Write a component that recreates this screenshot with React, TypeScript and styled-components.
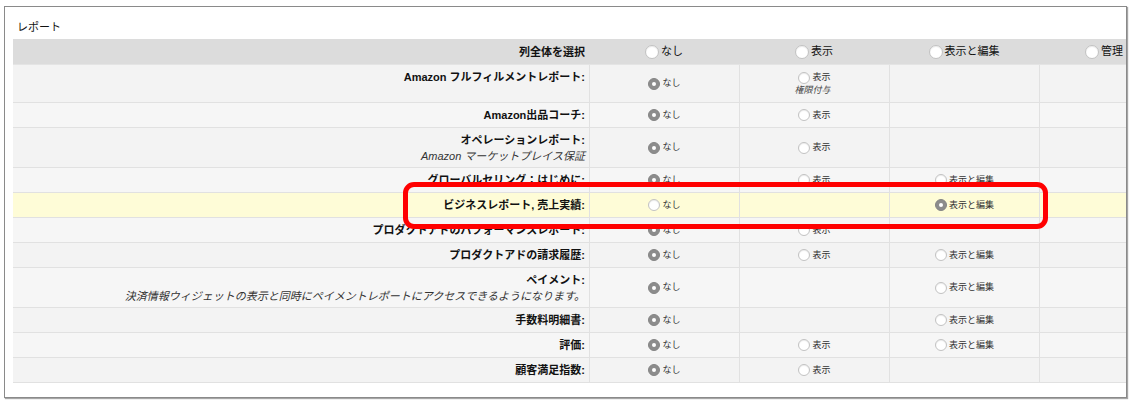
import React from "react";
import styled, { createGlobalStyle } from "styled-components";

const Global = createGlobalStyle`
  html, body { margin: 0; padding: 0; background: #fff; }
  body { font-family: "Liberation Sans", "Noto Sans CJK JP", sans-serif; color: #111; }
  * { box-sizing: border-box; }
`;

const Page = styled.div`
  padding: 6px 0 0 4px;
  width: 1137px;
  height: 405px;
`;

const Panel = styled.section`
  position: relative;
  width: 1123px;
  height: 392px;
  border: 1px solid #8a8a8a;
  box-shadow: 1px 1px 1px rgba(0, 0, 0, 0.35);
  padding: 0 0 0 8px;
  overflow: hidden;
`;

const Title = styled.h2`
  margin: 0;
  padding: 13px 0 0 4px;
  height: 32px;
  font-size: 11px;
  font-weight: normal;
  line-height: 14px;
  color: #111;
`;

const Table = styled.div`
  width: 1156px;
  display: flex;
  flex-direction: column;
`;

const Row = styled.div<{ $bg: string; $height: number; $head?: boolean }>`
  display: grid;
  grid-template-columns: 576px 150px 150px 150px 130px;
  height: ${(p) => p.$height}px;
  background: ${(p) => p.$bg};
  border-bottom: 1px solid ${(p) => (p.$head ? "#e4e4e4" : "#e1e1e1")};
`;

const LabelCell = styled.div<{ $head?: boolean }>`
  display: flex;
  flex-direction: column;
  align-items: flex-end;
  justify-content: ${(p) => (p.$head ? "center" : "flex-start")};
  padding: ${(p) => (p.$head ? "0 4px 0 0" : "4px 4px 0 0")};
  text-align: right;
`;

const LabelMain = styled.span`
  font-size: 11px;
  font-weight: bold;
  line-height: 16px;
  color: #111;
  white-space: nowrap;
`;

const LabelSub = styled.span`
  font-size: 11px;
  font-style: italic;
  line-height: 17px;
  color: #333;
  white-space: nowrap;
`;

const OptionCell = styled.div<{ $head?: boolean }>`
  display: flex;
  flex-direction: column;
  align-items: center;
  justify-content: center;
  border-left: ${(p) => (p.$head ? "none" : "1px solid #e1e1e1")};
`;

const Option = styled.label<{ $head?: boolean }>`
  display: flex;
  align-items: center;
  gap: 2px;
  font-size: ${(p) => (p.$head ? 11 : 9)}px;
  line-height: 13px;
  color: ${(p) => (p.$head ? "#111" : "#333")};
  white-space: nowrap;
`;

const Note = styled.span`
  font-size: 9px;
  font-style: italic;
  line-height: 12px;
  color: #444;
  margin-left: -4px;
`;

const Radio = styled.span<{ $checked?: boolean; $size: number }>`
  position: relative;
  display: inline-block;
  width: ${(p) => p.$size}px;
  height: ${(p) => p.$size}px;
  border-radius: 50%;
  background: ${(p) => (p.$checked ? "#8c8c8c" : "#fff")};
  border: 1px solid ${(p) => (p.$checked ? "#858585" : "#c2c2c2")};
  box-shadow: ${(p) => (p.$checked ? "none" : "inset 0 1px 1px rgba(0,0,0,0.08)")};
  flex: none;
  &::after {
    content: "";
    display: ${(p) => (p.$checked ? "block" : "none")};
    position: absolute;
    left: 50%;
    top: 50%;
    width: 4px;
    height: 4px;
    margin: -2px 0 0 -2px;
    border-radius: 50%;
    background: #fff;
  }
`;

const Highlight = styled.div`
  position: absolute;
  left: 398px;
  top: 175px;
  width: 645px;
  height: 47px;
  border: 5px solid #ff0000;
  border-radius: 11px;
  pointer-events: none;
`;

type Opt = { text: string; checked?: boolean; note?: string } | null;

type ReportRow = {
  label: string;
  sub?: string;
  opts: Opt[];
  height: number;
  highlight?: boolean;
};

const rows: ReportRow[] = [
  {
    label: "Amazon フルフィルメントレポート:",
    opts: [{ text: "なし", checked: true }, { text: "表示", note: "権限付与" }, null, null],
    height: 38,
  },
  { label: "Amazon出品コーチ:", opts: [{ text: "なし", checked: true }, { text: "表示" }, null, null], height: 25 },
  {
    label: "オペレーションレポート:",
    sub: "Amazon マーケットプレイス保証",
    opts: [{ text: "なし", checked: true }, { text: "表示" }, null, null],
    height: 40,
  },
  {
    label: "グローバルセリング：はじめに:",
    opts: [{ text: "なし", checked: true }, { text: "表示" }, { text: "表示と編集" }, null],
    height: 25,
  },
  {
    label: "ビジネスレポート, 売上実績:",
    opts: [{ text: "なし" }, null, { text: "表示と編集", checked: true }, null],
    height: 25,
    highlight: true,
  },
  {
    label: "プロダクトアドのパフォーマンスレポート:",
    opts: [{ text: "なし", checked: true }, { text: "表示" }, null, null],
    height: 25,
  },
  {
    label: "プロダクトアドの請求履歴:",
    opts: [{ text: "なし", checked: true }, { text: "表示" }, { text: "表示と編集" }, null],
    height: 25,
  },
  {
    label: "ペイメント:",
    sub: "決済情報ウィジェットの表示と同時にペイメントレポートにアクセスできるようになります。",
    opts: [{ text: "なし", checked: true }, null, { text: "表示と編集" }, null],
    height: 40,
  },
  { label: "手数料明細書:", opts: [{ text: "なし", checked: true }, null, { text: "表示と編集" }, null], height: 25 },
  {
    label: "評価:",
    opts: [{ text: "なし", checked: true }, { text: "表示" }, { text: "表示と編集" }, null],
    height: 25,
  },
  { label: "顧客満足指数:", opts: [{ text: "なし", checked: true }, { text: "表示" }, null, null], height: 25 },
];

const headerOpts = ["なし", "表示", "表示と編集", "管理"];

export default function App() {
  return (
    <Page>
      <Global />
      <Panel>
        <Title>レポート</Title>
        <Table>
          <Row $bg="#dcdcdc" $height={26} $head>
            <LabelCell $head>
              <LabelMain>列全体を選択</LabelMain>
            </LabelCell>
            {headerOpts.map((o) => (
              <OptionCell key={o} $head>
                <Option $head>
                  <Radio $size={14} />
                  {o}
                </Option>
              </OptionCell>
            ))}
          </Row>
          {rows.map((r, i) => (
            <Row
              key={r.label}
              $height={r.height}
              $bg={r.highlight ? "#fefcd7" : i % 2 === 0 ? "#f3f3f3" : "#f6f6f6"}
            >
              <LabelCell>
                <LabelMain>{r.label}</LabelMain>
                {r.sub && <LabelSub>{r.sub}</LabelSub>}
              </LabelCell>
              {r.opts.map((o, j) => (
                <OptionCell key={j}>
                  {o && (
                    <>
                      <Option>
                        <Radio $size={12} $checked={o.checked} />
                        {o.text}
                      </Option>
                      {o.note && <Note>{o.note}</Note>}
                    </>
                  )}
                </OptionCell>
              ))}
            </Row>
          ))}
        </Table>
        <Highlight />
      </Panel>
    </Page>
  );
}
